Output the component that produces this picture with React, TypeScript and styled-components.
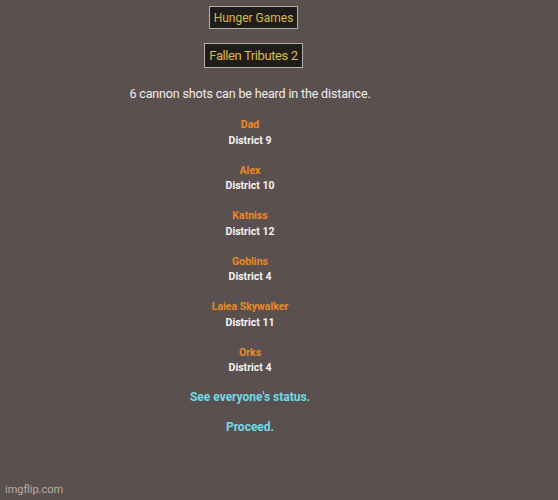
import styled, { createGlobalStyle } from 'styled-components'

const GlobalStyle = createGlobalStyle`
  html, body {
    margin: 0;
    padding: 0;
    background: #5b5050;
  }
  body {
    font-family: Roboto, "Liberation Sans", sans-serif;
  }
`

type Tribute = { name: string; district: number }

const fallen: Tribute[] = [
  { name: 'Dad', district: 9 },
  { name: 'Alex', district: 10 },
  { name: 'Katniss', district: 12 },
  { name: 'Goblins', district: 4 },
  { name: 'Laiea Skywalker', district: 11 },
  { name: 'Orks', district: 4 },
]

function App() {
  return (
    <>
      <GlobalStyle />
      <Page>
        <Header>
          <TitleBox size={12}>Hunger Games</TitleBox>
          <TitleBox size={13} tight>Fallen Tributes 2</TitleBox>
        </Header>
        <Cannons>{fallen.length} cannon shots can be heard in the distance.</Cannons>
        <TributeList>
          {fallen.map((t) => (
            <TributeItem key={t.name}>
              <Name>{t.name}</Name>
              <District>District {t.district}</District>
            </TributeItem>
          ))}
        </TributeList>
        <Actions>
          <ActionLink>See everyone's status.</ActionLink>
          <ActionLink>Proceed.</ActionLink>
        </Actions>
      </Page>
      <Watermark>imgflip.com</Watermark>
    </>
  )
}

const Page = styled.div`
  width: 500px;
  height: 500px;
  display: flex;
  flex-direction: column;
  align-items: center;
  padding-top: 6px;
  box-sizing: border-box;
`

const Header = styled.div`
  display: flex;
  flex-direction: column;
  align-items: center;
  gap: 14px;
  margin-left: 7px;
`

const TitleBox = styled.div<{ size: number; tight?: boolean }>`
  background: #1f1d1c;
  border: 1.5px solid #b4b0ad;
  color: #dcbb48;
  font-size: ${(p) => p.size}px;
  letter-spacing: ${(p) => (p.tight ? '-0.4px' : '0')};
  line-height: 1;
  padding: ${(p) => (p.tight ? '5px 4px 5px' : '4.5px 4px')};
`

const Cannons = styled.div`
  margin-top: 18px;
  color: #f1eeec;
  font-size: 12.5px;
  letter-spacing: -0.15px;
  line-height: 15px;
`

const TributeList = styled.div`
  margin-top: 17px;
  display: flex;
  flex-direction: column;
  align-items: center;
  gap: 17px;
`

const TributeItem = styled.div`
  display: flex;
  flex-direction: column;
  align-items: center;
  gap: 2.5px;
  font-weight: 700;
  font-size: 10.5px;
  line-height: 13px;
`

const Name = styled.div`
  color: #e98a22;
`

const District = styled.div`
  color: #f5f3f2;
`

const Actions = styled.div`
  margin-top: 16px;
  display: flex;
  flex-direction: column;
  align-items: center;
  gap: 15px;
`

const ActionLink = styled.div`
  color: #6fdbe6;
  font-weight: 700;
  font-size: 12px;
  line-height: 15px;
`

const Watermark = styled.div`
  position: absolute;
  left: 5px;
  bottom: 4px;
  color: #b5adab;
  font-size: 11px;
`

export default App
